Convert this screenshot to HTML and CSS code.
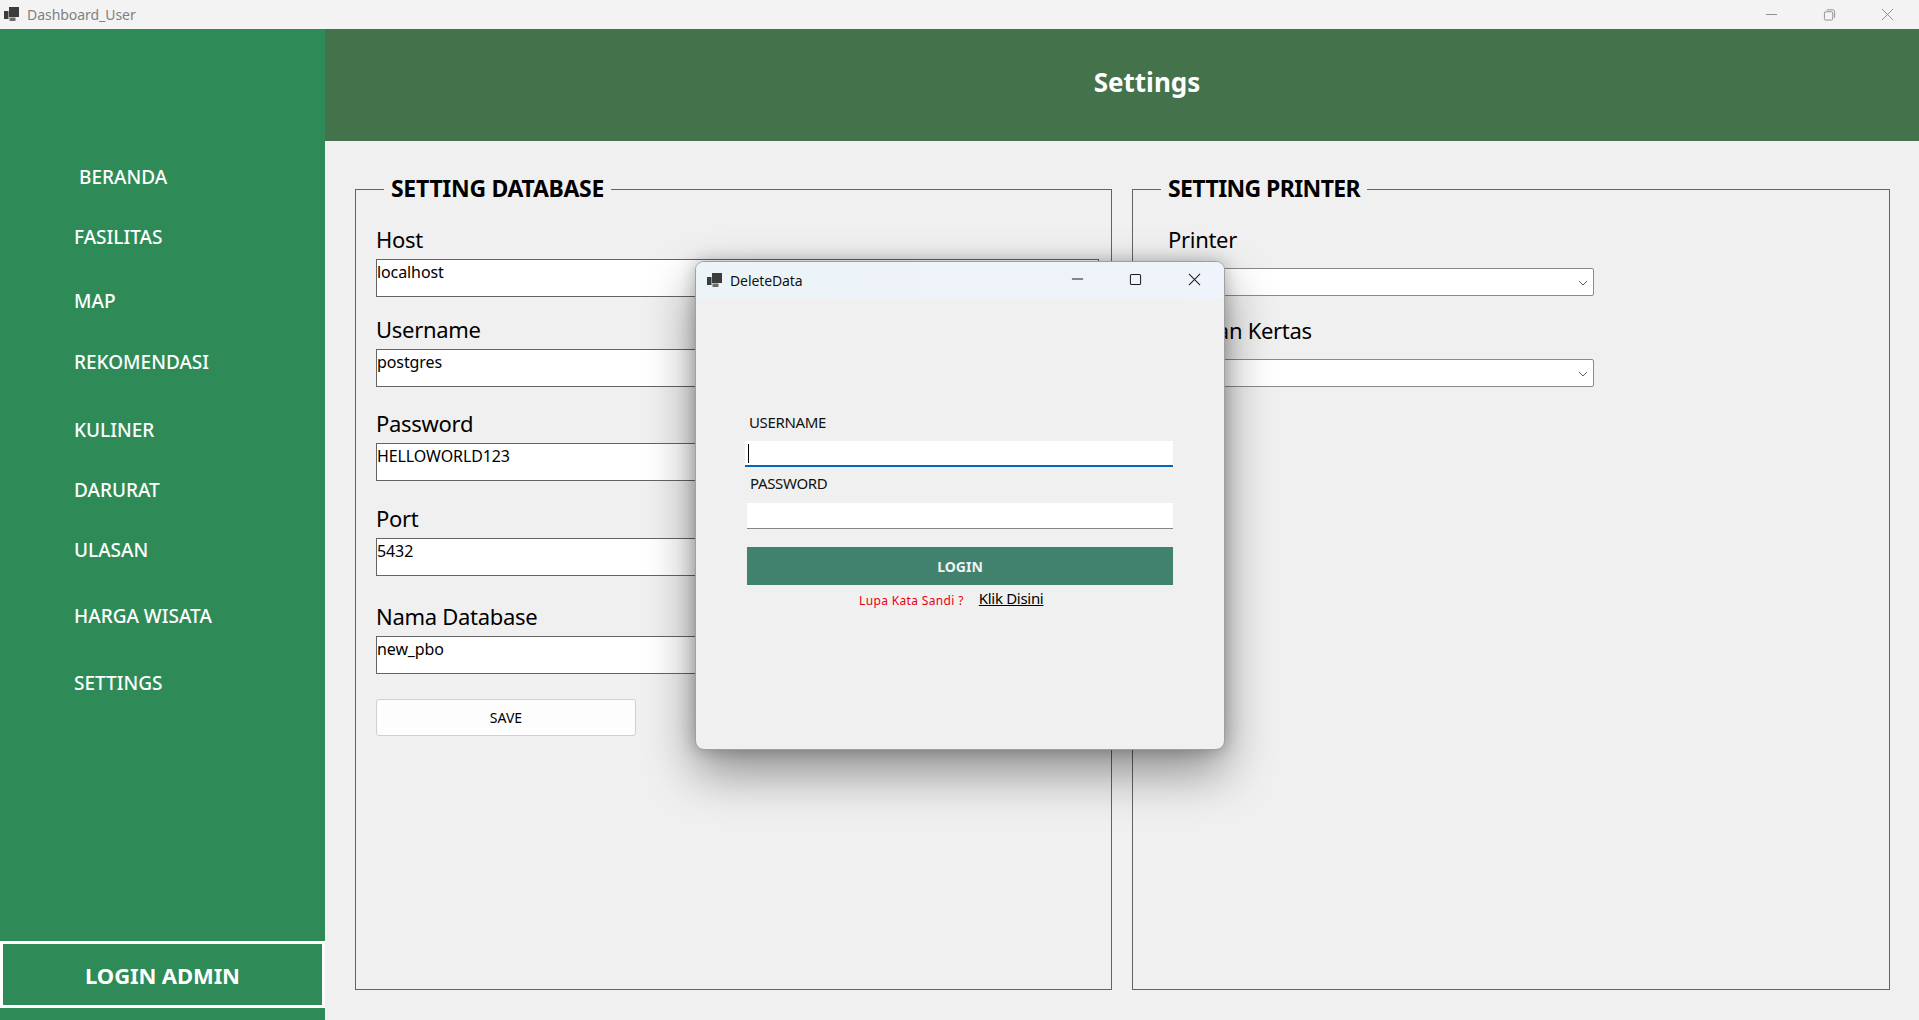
FILE: index.html
```html
<!DOCTYPE html>
<html lang="id">
<head>
<meta charset="utf-8">
<title>Dashboard_User</title>
<link rel="stylesheet" href="styles.css">
</head>
<body>
<svg class="defs" width="0" height="0" aria-hidden="true">
  <symbol id="app-icon" viewBox="0 0 15 14">
    <rect x="5" y="0" width="10" height="10" fill="#3c3c3c"/>
    <rect x="0" y="4" width="4.5" height="8" fill="#3c3c3c"/>
    <rect x="5.5" y="10.5" width="6" height="3.5" fill="#6a6a6a"/>
  </symbol>
</svg>
<div class="app">
  <header class="titlebar">
    <svg class="app-icon"><use href="#app-icon"/></svg>
    <span class="titlebar-text">Dashboard_User</span>
    <div class="win-controls">
      <svg class="win-btn" viewBox="0 0 14 14"><path d="M1 7h12" /></svg>
      <svg class="win-btn" viewBox="0 0 14 14"><path d="M1.5 5.5a1.5 1.5 0 0 1 1.5-1.5h6a1.5 1.5 0 0 1 1.5 1.5v6a1.5 1.5 0 0 1-1.5 1.5h-6a1.5 1.5 0 0 1-1.5-1.5zM4 2h6.5a2 2 0 0 1 2 2v6.5"/></svg>
      <svg class="win-btn" viewBox="0 0 14 14"><path d="M1 1l12 12M13 1L1 13"/></svg>
    </div>
  </header>
  <div class="shell">
    <aside class="sidebar">
      <nav class="nav">
        <a class="nav-item nav-first">BERANDA</a>
        <a class="nav-item">FASILITAS</a>
        <a class="nav-item">MAP</a>
        <a class="nav-item">REKOMENDASI</a>
        <a class="nav-item">KULINER</a>
        <a class="nav-item">DARURAT</a>
        <a class="nav-item">ULASAN</a>
        <a class="nav-item">HARGA WISATA</a>
        <a class="nav-item">SETTINGS</a>
      </nav>
      <button class="admin-btn">LOGIN ADMIN</button>
    </aside>
    <main class="main">
      <div class="page-head"><h1 class="page-title">Settings</h1></div>
      <div class="groups">
        <fieldset class="group group-db">
          <legend class="group-title">SETTING DATABASE</legend>
          <div class="db-fields">
            <div class="field"><label class="field-label">Host</label><input class="text-input" value="localhost"></div>
            <div class="field"><label class="field-label">Username</label><input class="text-input" value="postgres"></div>
            <div class="field"><label class="field-label">Password</label><input class="text-input" value="HELLOWORLD123"></div>
            <div class="field"><label class="field-label">Port</label><input class="text-input" value="5432"></div>
            <div class="field"><label class="field-label">Nama Database</label><input class="text-input" value="new_pbo"></div>
          </div>
          <button class="save-btn">SAVE</button>
        </fieldset>
        <fieldset class="group">
          <legend class="group-title group-title-tight">SETTING PRINTER</legend>
          <div class="printer-fields">
            <div class="field"><label class="field-label">Printer</label>
              <div class="combo"><svg class="chevron" viewBox="0 0 10 6"><path d="M1 1l4 4 4-4"/></svg></div>
            </div>
            <div class="field"><label class="field-label">Ukuran Kertas</label>
              <div class="combo"><svg class="chevron" viewBox="0 0 10 6"><path d="M1 1l4 4 4-4"/></svg></div>
            </div>
          </div>
        </fieldset>
      </div>
    </main>
  </div>
</div>

<section class="dialog">
  <header class="dialog-bar">
    <svg class="dialog-icon"><use href="#app-icon"/></svg>
    <span class="dialog-title">DeleteData</span>
    <div class="dialog-controls">
      <svg class="dlg-btn" viewBox="0 0 14 14"><path d="M1 6.5h12"/></svg>
      <svg class="dlg-btn" viewBox="0 0 14 14"><rect x="1.5" y="1.5" width="11" height="11" rx="1.5"/></svg>
      <svg class="dlg-btn dlg-close" viewBox="0 0 14 14"><path d="M1 1l12 12M13 1L1 13"/></svg>
    </div>
  </header>
  <form class="dialog-body">
    <label class="login-label">USERNAME</label>
    <div class="login-focus">
      <input class="login-input login-input-active">
      <span class="caret"></span>
    </div>
    <label class="login-label login-label-pass">PASSWORD</label>
    <input class="login-input" type="password">
    <button type="button" class="login-btn">LOGIN</button>
    <div class="forgot">
      <span class="forgot-text">Lupa Kata Sandi ?</span>
      <a class="forgot-link">Klik Disini</a>
    </div>
  </form>
</section>
</body>
</html>
```

FILE: styles.css
```css
* { box-sizing: border-box; }
html, body { margin: 0; height: 100%; }
body {
  width: 1919px;
  height: 1020px;
  overflow: hidden;
  background: #f0f0f0;
  color: #000;
  font-family: "Noto Sans", "Open Sans", sans-serif;
}
.defs { position: absolute; }

.app { display: flex; flex-direction: column; height: 1020px; }

.titlebar {
  flex: 0 0 29px;
  display: flex;
  align-items: center;
  padding-left: 4px;
  background: #f3f3f3;
}
.app-icon { width: 15px; height: 14px; margin-right: 8px; margin-top: -2px; }
.titlebar-text { font-size: 14px; color: #7f7f7f; letter-spacing: -0.05px; }
.win-controls { margin-left: auto; display: flex; gap: 45px; padding-right: 25px; }
.win-btn { width: 13px; height: 13px; fill: none; stroke: #8a8a8a; stroke-width: 1; }

.shell { flex: 1; display: flex; min-height: 0; }

.sidebar {
  flex: 0 0 325px;
  display: flex;
  flex-direction: column;
  background: #2e8b57;
}
.nav {
  display: grid;
  grid-template-rows: 60px 64px 61px 68px 60px 60px 66px 67px 40px;
  padding: 118px 0 0 74px;
  height: 912px;
}
.nav-item {
  height: 60px;
  line-height: 60px;
  color: #fff;
  font-size: 19px;
  font-weight: 500;
  white-space: nowrap;
}
.nav-first { margin-left: 5px; }

.admin-btn {
  height: 67px;
  margin: 0 0 12px;
  padding: 1px 0 0;
  border: 3px solid #fff;
  background: #2e8b57;
  color: #fff;
  font: 700 22px "Noto Sans", sans-serif;
  letter-spacing: -0.1px;
}

.main { flex: 1; display: flex; flex-direction: column; min-width: 0; }
.page-head {
  flex: 0 0 112px;
  display: flex;
  align-items: center;
  justify-content: center;
  padding: 0 0 7px 50px;
  background: #44734b;
}
.page-title { margin: 0; font-size: 26px; font-weight: 700; color: #fff; }

.groups {
  flex: 1;
  display: flex;
  gap: 20px;
  padding: 33px 29px 30px 30px;
  min-height: 0;
}
.group {
  flex: 1;
  min-width: 0;
  margin: 0;
  padding: 0 0 0 20px;
  border: 1px solid #646464;
}
.group-db { flex: 0 0 757px; }
.group-title {
  margin-left: 8px;
  padding: 0 7px 2px;
  font-size: 23px;
  font-weight: 700;
  line-height: 28px;
  letter-spacing: -0.3px;
  white-space: nowrap;
}
.group-title-tight { letter-spacing: -0.6px; }

.db-fields {
  display: grid;
  grid-template-rows: 90px 94px 95px 98px 100px;
  padding: 27px 12px 0 0;
}
.printer-fields {
  display: grid;
  grid-template-rows: 91px 91px;
  padding: 27px 0 0 15px;
  width: 441px;
}
.field { display: flex; flex-direction: column; }
.field-label {
  height: 28px;
  line-height: 16px;
  font-size: 22px;
  white-space: nowrap;
  letter-spacing: -0.3px;
}
.text-input {
  display: block;
  width: 100%;
  height: 38px;
  padding: 0 0 12px 0;
  border: 1px solid #646464;
  border-radius: 0;
  outline: none;
  background: #fff;
  color: #000;
  font: 16px "Noto Sans", sans-serif;
  letter-spacing: -0.1px;
}
.save-btn {
  display: block;
  width: 260px;
  height: 37px;
  margin-top: -9px;
  border: 1px solid #d0d0d0;
  border-radius: 3px;
  background: #fdfdfd;
  color: #000;
  font: 14px "Noto Sans", sans-serif;
}
.combo {
  position: relative;
  height: 28px;
  margin-top: 9px;
  border: 1px solid #8a8a8a;
  border-radius: 2px;
  background: #fff;
}
.chevron {
  position: absolute;
  top: 11px;
  right: 5px;
  width: 10px;
  height: 6px;
  fill: none;
  stroke: #606060;
  stroke-width: 1;
}

.dialog {
  position: absolute;
  left: 695px;
  top: 261px;
  width: 530px;
  height: 489px;
  display: flex;
  flex-direction: column;
  border: 1px solid #a0a0a0;
  border-radius: 9px;
  background: #f0f0f0;
  box-shadow: 0 22px 50px rgba(0, 0, 0, 0.42), 0 0 16px rgba(0, 0, 0, 0.24);
  overflow: hidden;
}
.dialog-bar {
  flex: 0 0 37px;
  display: flex;
  align-items: center;
  padding-left: 11px;
  background: linear-gradient(90deg, #ecf4f7, #eff3fb);
}
.dialog-icon { width: 15px; height: 14px; margin-right: 8px; margin-top: -2px; }
.dialog-title { font-size: 14px; letter-spacing: -0.1px; color: #111; }
.dialog-controls { margin-left: auto; display: flex; gap: 45px; padding-right: 23px; }
.dlg-btn { width: 13px; height: 13px; fill: none; stroke: #1a1a1a; stroke-width: 1.1; margin-top: -2px; }
.dlg-close { margin-left: 1px; }

.dialog-body {
  flex: 1;
  display: flex;
  flex-direction: column;
  padding: 114px 51px 0;
}
.login-label {
  height: 28px;
  line-height: 18px;
  padding-left: 2px;
  font-size: 15px;
  letter-spacing: -0.35px;
  color: #111;
}
.login-label-pass { height: 29px; padding-left: 3px; margin-top: 7px; }
.login-focus { position: relative; margin-left: -2px; }
.login-input {
  display: block;
  width: 426px;
  height: 26px;
  padding: 0 4px;
  border: 0;
  border-bottom: 1px solid #868686;
  border-radius: 0;
  outline: none;
  background: #fff;
}
.login-input-active {
  width: 428px;
  height: 26px;
  border-bottom: 2px solid #0067c0;
}
.caret {
  position: absolute;
  left: 3px;
  top: 3px;
  width: 1px;
  height: 19px;
  background: #000;
}
.login-btn {
  width: 426px;
  height: 38px;
  margin-top: 18px;
  padding: 0;
  border: 0;
  background: #41826e;
  color: #f2f2f2;
  font: 700 14px "Noto Sans", sans-serif;
}
.forgot {
  display: flex;
  align-items: flex-start;
  gap: 15px;
  margin-top: 4px;
  padding-left: 112px;
}
.forgot-text { margin-top: 3px; font-size: 12px; color: #e60012; letter-spacing: 0.35px; white-space: nowrap; }
.forgot-link { font-size: 15px; line-height: 19px; color: #000; text-decoration: underline; letter-spacing: -0.3px; white-space: nowrap; }
```
